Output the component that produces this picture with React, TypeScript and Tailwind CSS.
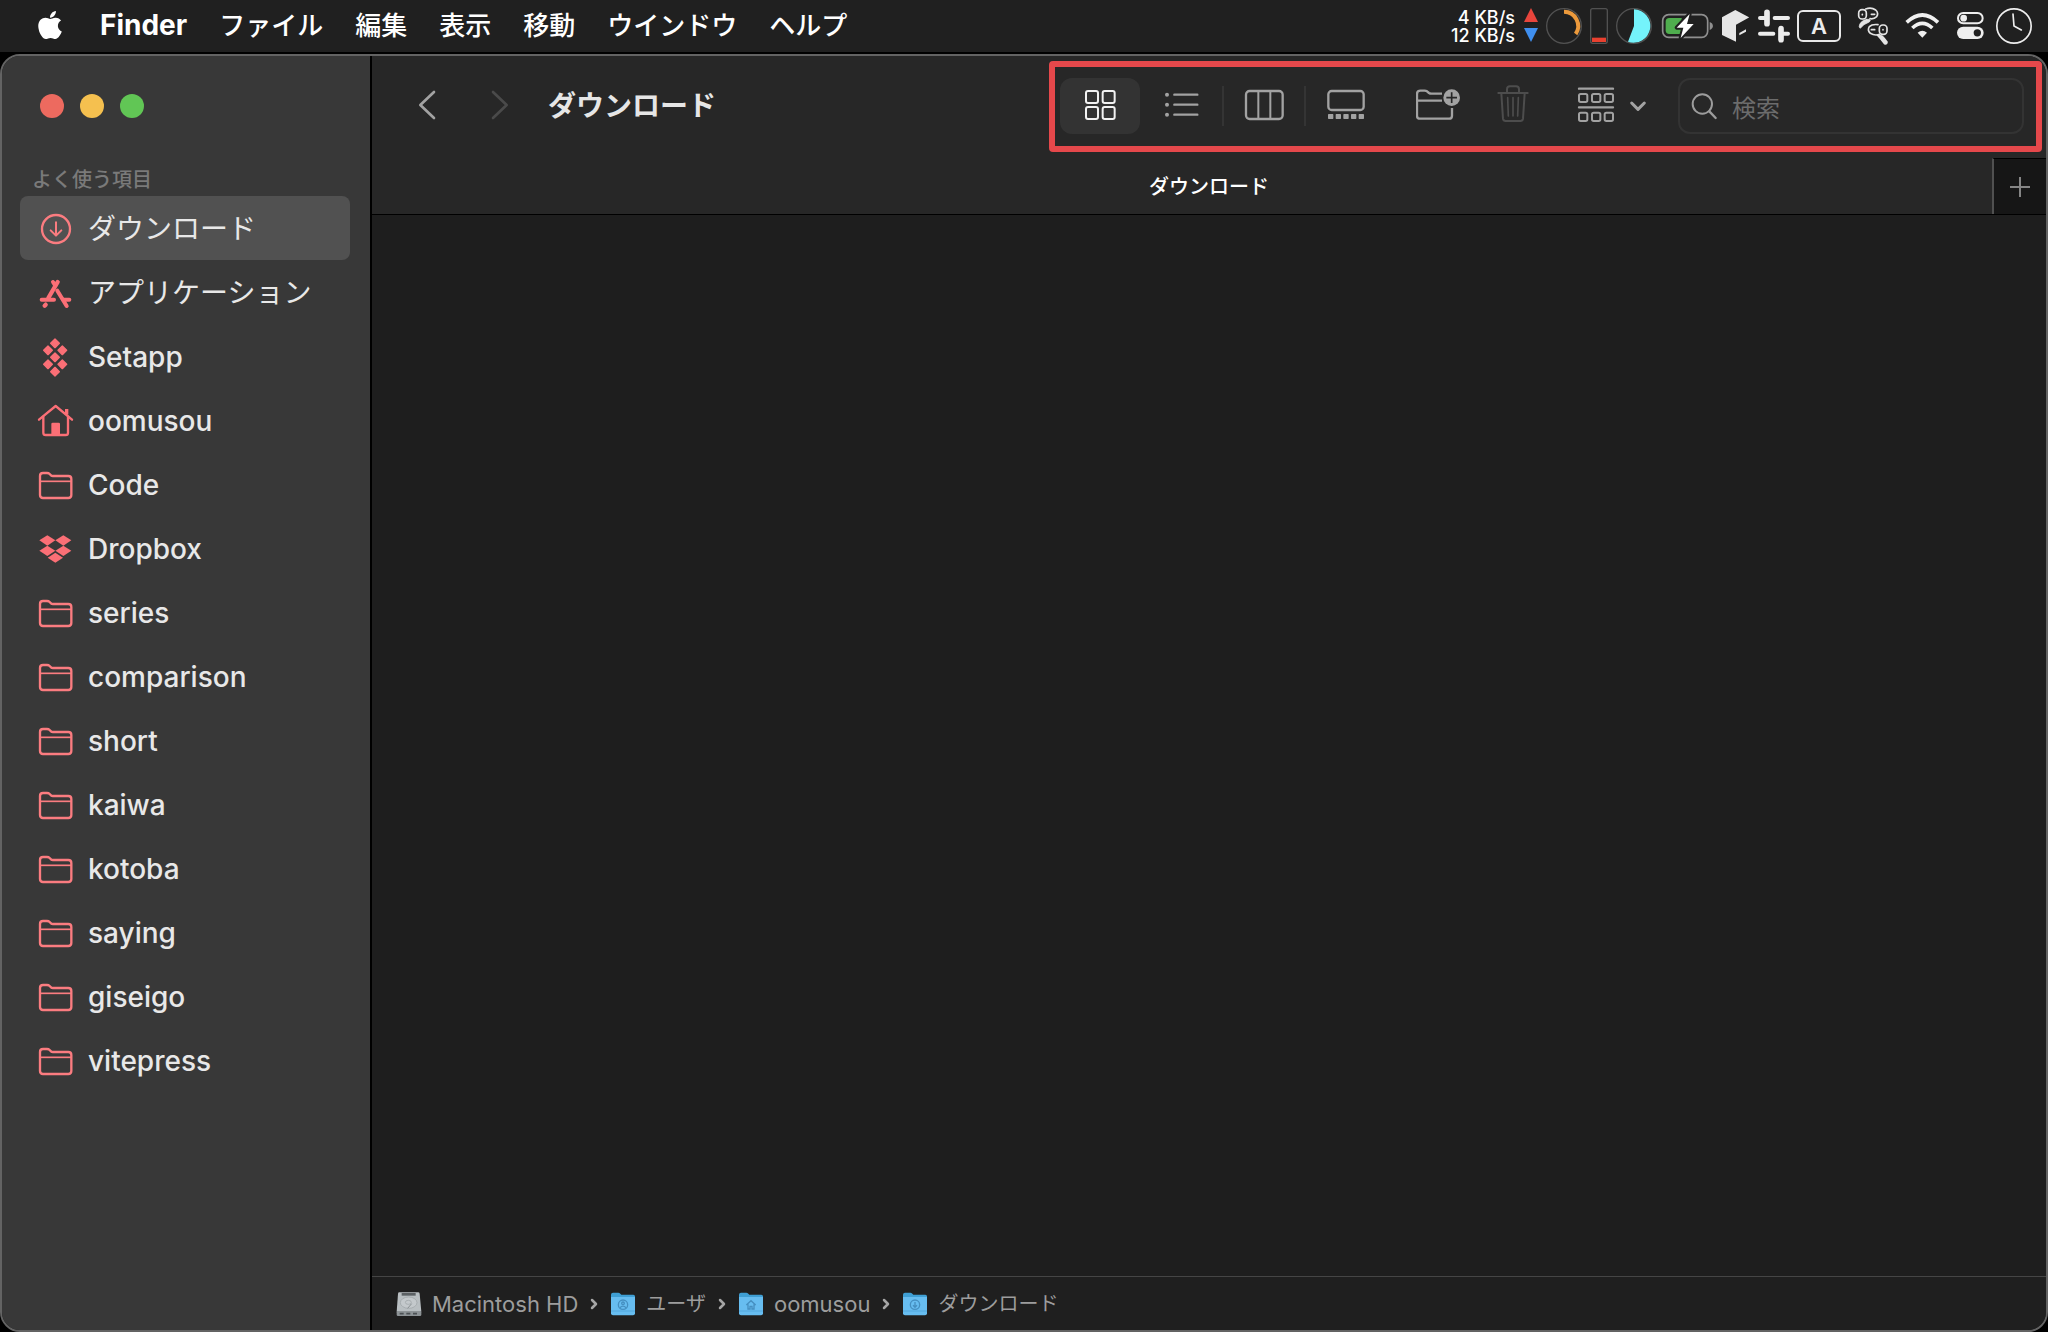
import React from "react";
import { FaApple } from "react-icons/fa";

/* ---------- Menu bar ---------- */

const menus = ["ファイル", "編集", "表示", "移動", "ウインドウ", "ヘルプ"];

function TrafficArrows() {
  return (
    <svg className="h-13 w-4" viewBox="279 0 48 156" aria-hidden="true">
      <path d="M303 24 L324 66 H282 Z" fill="#e8453c" />
      <path d="M282 84 H324 L303 126 Z" fill="#3f8ff0" />
    </svg>
  );
}

function CpuRing() {
  return (
    <svg className="h-13 w-[34px]" viewBox="351 0 102 156" fill="none" overflow="visible" aria-hidden="true">
      <circle cx="402" cy="78" r="52" stroke="#515151" strokeWidth="4" />
      <path d="M402 35.500 A42.500 42.500 0 0 1 437 102" stroke="#ec9a3c" strokeWidth="12" />
    </svg>
  );
}

function MemoryBar() {
  return (
    <svg className="h-13 w-[18px]" viewBox="477 0 54 156" overflow="visible" aria-hidden="true">
      <rect x="482" y="26" width="50" height="104" rx="6" fill="none" stroke="#515151" strokeWidth="4" />
      <rect x="486" y="113" width="42" height="13" fill="#e8402f" />
    </svg>
  );
}

function DiskPie() {
  return (
    <svg className="h-13 w-[38px]" viewBox="555 0 114 156" aria-hidden="true">
      <circle cx="612" cy="78" r="52" fill="none" stroke="#515151" strokeWidth="4" />
      <path d="M612 78 V28 A50 50 0 1 1 594 125 Z" fill="#74f3fb" />
    </svg>
  );
}

function Battery() {
  return (
    <svg className="h-13 w-[52px]" viewBox="693 0 156 156" aria-hidden="true">
      <rect x="698" y="44" width="135" height="68" rx="18" fill="none" stroke="#8f8f8f" strokeWidth="5" />
      <path d="M839 66 C852 70 852 86 839 90 Z" fill="#8f8f8f" />
      <path d="M718 54 H755 V102 H718 Q707 102 707 91 V65 Q707 54 718 54 Z" fill="#4fae4e" />
      <path d="M779 42 L740 83 H760 L752 114 L791 72 H771 Z" fill="#fff" stroke="#202020" strokeWidth="12" paintOrder="stroke" strokeLinejoin="round" />
    </svg>
  );
}

function Cube() {
  return (
    <svg className="h-13 w-7" viewBox="-27 0 84 156" fill="#e6e6e6" aria-hidden="true">
      <path d="M16 30 L58 52 L18 74 V125 L-24 105 V52 Z" />
      <path d="M28 99 L48 88 V95 L28 106 Z" />
    </svg>
  );
}

function Tuner() {
  return (
    <svg className="h-13 w-8" viewBox="81 0 96 156" fill="none" stroke="#ececec" strokeWidth="12" strokeLinecap="round" overflow="visible" aria-hidden="true">
      <path d="M90 54 H111 M134 54 H174 M90 101 H130 M153 101 H174" />
      <path d="M111 37 V71 M153 86 V119" strokeWidth="17" />
    </svg>
  );
}

function Earbuds() {
  return (
    <svg className="h-13 w-8" viewBox="381 0 96 156" fill="none" stroke="#e4e4e4" strokeWidth="5" strokeLinecap="round" overflow="visible" aria-hidden="true">
      <rect x="386" y="29" width="23" height="28" rx="10" />
      <path d="M397 43 V44" />
      <path d="M407 27 Q424 21 437 30 Q447 39 440 50 Q432 58 420 56" />
      <path d="M424 43 H434" />
      <path d="M410 58 H418 Q424 60 418 66 L402 74 L391 85 Q385 82 389 73 Q394 62 410 58 Z" fill="#e4e4e4" strokeWidth="2" />
      <rect x="448" y="75" width="23" height="28" rx="10" />
      <path d="M459 89 V90" />
      <path d="M449 103 Q434 108 421 100 Q411 91 418 80 Q426 72 444 74" />
      <path d="M424 89 H434" />
      <path d="M444 107 Q456 106 461 113 L471 126 Q471 133 464 131 L452 116 Z" fill="#e4e4e4" />
    </svg>
  );
}

function Wifi() {
  return (
    <svg className="h-13 w-9" viewBox="525 0 108 156" fill="none" stroke="#f0f0f0" strokeWidth="11" aria-hidden="true">
      <path d="M530 67 Q577 23 624 67" />
      <path d="M547 84 Q577 56 607 84" />
      <path d="M577 113 L563 98 Q577 86 591 98 Z" fill="#f0f0f0" stroke="none" />
    </svg>
  );
}

function ControlCenter() {
  return (
    <svg className="h-13 w-7" viewBox="681 0 84 156" overflow="visible" aria-hidden="true">
      <rect x="684" y="39" width="74" height="31" rx="15.500" fill="none" stroke="#eee" strokeWidth="6" />
      <circle cx="701" cy="54.500" r="10" fill="#eee" />
      <rect x="681" y="80" width="80" height="37" rx="18.500" fill="#eee" />
      <circle cx="742" cy="98.500" r="11" fill="#202020" />
    </svg>
  );
}

function Clock() {
  return (
    <svg className="h-13 w-[34px]" viewBox="801 0 102 156" fill="none" stroke="#eee" strokeWidth="5" strokeLinecap="round" overflow="visible" aria-hidden="true">
      <circle cx="852" cy="78" r="51.500" />
      <path d="M849 42 L852 78 L874 90" />
    </svg>
  );
}

function MenuBar() {
  return (
    <header className="flex h-13 items-center justify-between bg-[#202020] text-white">
      <nav className="flex h-full items-center pl-9 text-[26px] leading-8 whitespace-nowrap" aria-label="メニュー">
        <button type="button" aria-label="Apple" className="mr-9 pb-0.5">
          <FaApple className="h-8 w-7" />
        </button>
        <div className="flex items-baseline gap-8 pb-0.5">
          <button type="button" className="text-[28px] font-bold">Finder</button>
          {menus.map((m) => (
            <button key={m} type="button" className="font-medium">{m}</button>
          ))}
        </div>
      </nav>
      <div className="flex items-center gap-4 pr-[17px]">
        <div className="flex items-center gap-2">
          <div className="pt-0.5 text-right text-[18px] leading-[18px] font-medium whitespace-nowrap">
            <div>4 KB/s</div>
            <div>12 KB/s</div>
          </div>
          <TrafficArrows />
          <CpuRing />
          <MemoryBar />
          <DiskPie />
          <Battery />
          <Cube />
          <Tuner />
          <span className="flex h-8 w-11 items-center justify-center rounded-md border-2 border-[#e8e8e8] text-[22px] leading-7 font-semibold text-[#ececec]">A</span>
        </div>
        <Earbuds />
        <Wifi />
        <div className="flex gap-3">
          <ControlCenter />
          <Clock />
        </div>
      </div>
    </header>
  );
}

/* ---------- Sidebar ---------- */

const sideIcon = "h-10 w-9 shrink-0 overflow-visible";

function DownloadIcon() {
  return (
    <svg className={sideIcon} viewBox="114 624 108 120" fill="none" stroke="#fb7c80" strokeWidth="7" strokeLinecap="round" strokeLinejoin="round" aria-hidden="true">
      <circle cx="168" cy="687" r="42" />
      <path d="M168 667 V705 M152 691 L168 707 L184 691" strokeWidth="6" />
    </svg>
  );
}

function AppsIcon() {
  return (
    <svg className={sideIcon} viewBox="114 36 108 120" fill="none" stroke="#fb6f76" strokeWidth="12" strokeLinecap="round" aria-hidden="true">
      <path d="M173 66 L145 114" strokeWidth="13" />
      <path d="M159 66 L166 77" />
      <path d="M125 119 H162 M190 119 H208" />
      <path d="M172 92 L200 138" />
      <path d="M137 134 L134 137" strokeWidth="13" />
    </svg>
  );
}

const setappTiles = [[165, 250], [144, 271], [187, 271], [165, 292], [144, 313], [187, 313], [165, 335]];

function SetappIcon() {
  return (
    <svg className={sideIcon} viewBox="114 228 108 120" fill="#fb6f76" stroke="#fb6f76" strokeWidth="4" strokeLinejoin="round" aria-hidden="true">
      {setappTiles.map(([x, y]) => (
        <path key={`${x}-${y}`} d={`M${x} ${y - 13} L${x + 13} ${y} L${x} ${y + 13} L${x - 13} ${y} Z`} />
      ))}
    </svg>
  );
}

function HomeIcon() {
  return (
    <svg className={sideIcon} viewBox="114 420 108 120" fill="none" stroke="#fb6f76" strokeWidth="7" strokeLinecap="round" strokeLinejoin="round" aria-hidden="true">
      <path d="M117 479 L167 438 L216 479" />
      <path d="M130 470 V518 Q130 525 137 525 H197 Q204 525 204 518 V470" />
      <path d="M200 447 V464" strokeWidth="10" strokeLinecap="butt" />
      <path d="M154 525 V492 Q154 488 158 488 H176 Q180 488 180 492 V525 Z" fill="#fb6f76" stroke="none" />
    </svg>
  );
}

function FolderIcon() {
  return (
    <svg className={sideIcon} viewBox="114 612 108 120" fill="none" stroke="#fb7c80" strokeWidth="7" strokeLinejoin="round" aria-hidden="true">
      <path d="M120 648 Q120 639 129 639 H141 Q146 639 149 642 L153 646 Q155 648 159 648 H205 Q214 648 214 657 V705 Q214 714 205 714 H129 Q120 714 120 705 Z" />
      <path d="M120 664 H214" strokeWidth="5" />
    </svg>
  );
}

function DropboxIcon() {
  return (
    <svg className={sideIcon} viewBox="114 804 108 120" fill="#fb6f76" aria-hidden="true">
      <path d="M142 826 L166 841 L142 857 L118 841 Z" />
      <path d="M190 826 L214 841 L190 857 L166 841 Z" />
      <path d="M142 857 L166 872 L142 888 L118 872 Z" />
      <path d="M190 857 L214 872 L190 888 L166 872 Z" />
      <path d="M166 878 L189 893 L166 908 L143 893 Z" />
    </svg>
  );
}

const favorites: { name: string; icon: () => React.JSX.Element }[] = [
  { name: "ダウンロード", icon: DownloadIcon },
  { name: "アプリケーション", icon: AppsIcon },
  { name: "Setapp", icon: SetappIcon },
  { name: "oomusou", icon: HomeIcon },
  { name: "Code", icon: FolderIcon },
  { name: "Dropbox", icon: DropboxIcon },
  { name: "series", icon: FolderIcon },
  { name: "comparison", icon: FolderIcon },
  { name: "short", icon: FolderIcon },
  { name: "kaiwa", icon: FolderIcon },
  { name: "kotoba", icon: FolderIcon },
  { name: "saying", icon: FolderIcon },
  { name: "giseigo", icon: FolderIcon },
  { name: "vitepress", icon: FolderIcon },
];

function Sidebar() {
  return (
    <aside className="flex w-[370px] shrink-0 flex-col border-r-2 border-black bg-[#383838] pr-5 pl-[18px]">
      <div className="flex h-[100px] items-center gap-4 pl-5">
        <button type="button" aria-label="閉じる" className="size-6 rounded-full bg-[#ed6a5f]" />
        <button type="button" aria-label="しまう" className="size-6 rounded-full bg-[#f5c04f]" />
        <button type="button" aria-label="拡大" className="size-6 rounded-full bg-[#61c655]" />
      </div>
      <h2 className="h-10 pt-2 pl-3 text-[20px] leading-8 font-medium text-[#7a7a7a]">よく使う項目</h2>
      <nav aria-label="よく使う項目">
        {favorites.map(({ name, icon: Icon }, i) => (
          <a
            key={name}
            href="#"
            className={
              i === 0
                ? "flex h-16 items-center gap-3.5 rounded-lg bg-[#515151] pl-[18px] text-[28px] leading-10 font-medium text-[#e8e8e8]"
                : "flex h-16 items-center gap-3.5 rounded-lg pl-[18px] text-[28px] leading-10 font-medium text-[#e8e8e8]"
            }
          >
            <Icon />
            <span className={i < 2 ? "pt-0.5 font-normal whitespace-nowrap" : "pt-0.5 whitespace-nowrap"}>{name}</span>
          </a>
        ))}
      </nav>
    </aside>
  );
}

/* ---------- Toolbar ---------- */

function GridIcon() {
  return (
    <svg className="size-10" viewBox="120 108 120 120" fill="none" stroke="#f2f2f2" strokeWidth="6" aria-hidden="true">
      <rect x="138" y="123" width="36" height="36" rx="6" />
      <rect x="188" y="123" width="36" height="36" rx="6" />
      <rect x="138" y="171" width="36" height="36" rx="6" />
      <rect x="188" y="171" width="36" height="36" rx="6" />
    </svg>
  );
}

function ListIcon() {
  return (
    <svg className="size-10" viewBox="366 108 120 120" stroke="#a2a2a2" strokeWidth="7" strokeLinecap="round" aria-hidden="true">
      <path d="M403 134 H472 M403 164 H472 M403 194 H472" />
      <path d="M381 134 V134.100 M381 164 V164.100 M381 194 V194.100" strokeWidth="12" />
    </svg>
  );
}

function ColumnsIcon() {
  return (
    <svg className="size-10" viewBox="612 108 120 120" fill="none" stroke="#a2a2a2" strokeWidth="7" aria-hidden="true">
      <rect x="618" y="123" width="110" height="84" rx="11" />
      <path d="M655 123 V207 M691 123 V207" strokeWidth="6" />
    </svg>
  );
}

function GalleryIcon() {
  return (
    <svg className="size-10" viewBox="858 108 120 120" fill="#a2a2a2" aria-hidden="true">
      <rect x="865" y="123" width="106" height="57" rx="10" fill="none" stroke="#a2a2a2" strokeWidth="7" />
      {[864, 887, 910, 933, 956].map((x) => (
        <rect key={x} x={x} y="192" width="16" height="15" rx="2" />
      ))}
    </svg>
  );
}

function NewFolderIcon() {
  return (
    <svg className="h-10 w-11" viewBox="1128 108 132 120" fill="none" stroke="#a2a2a2" strokeWidth="7" strokeLinejoin="round" aria-hidden="true">
      <path d="M1206 131 H1174 Q1170 131 1167 129 L1161 124 Q1158 122 1154 122 H1141 Q1131 122 1131 132 V197 Q1131 206 1140 206 H1227 Q1236 206 1236 197 V174" />
      <path d="M1131 152 H1206" />
      <circle cx="1235" cy="143" r="25" fill="#a2a2a2" stroke="none" />
      <path d="M1235 127 V159 M1219 143 H1251" stroke="#272727" strokeWidth="5" />
    </svg>
  );
}

function TrashIcon() {
  return (
    <svg className="h-10 w-[34px]" viewBox="1368 108 102 120" fill="none" stroke="#4d4d4d" strokeWidth="6" strokeLinecap="round" strokeLinejoin="round" overflow="visible" aria-hidden="true">
      <path d="M1375 129 H1463" />
      <path d="M1401 128 V118 Q1401 109 1410 109 H1428 Q1437 109 1437 118 V128" />
      <path d="M1384 130 L1389 206 Q1390 213 1397 213 H1441 Q1448 213 1449 206 L1454 130" />
      <path d="M1403 143 L1405 198 M1419 143 V198 M1435 143 L1433 198" strokeWidth="5" />
    </svg>
  );
}

function GroupIcon() {
  return (
    <svg className="h-10 w-[68px]" viewBox="114 108 204 120" fill="none" stroke="#a2a2a2" strokeWidth="6" strokeLinecap="round" strokeLinejoin="round" overflow="visible" aria-hidden="true">
      <path d="M117 116 H219 M117 172 H219" strokeWidth="7" />
      {[117, 156, 194].map((x) => (
        <g key={x}>
          <rect x={x} y="132" width="25" height="24" rx="5" />
          <rect x={x} y="188" width="25" height="25" rx="5" />
        </g>
      ))}
      <path d="M275 159 L294 178 L313 159" strokeWidth="9" />
    </svg>
  );
}

function Toolbar() {
  return (
    <div className="flex h-[102px] justify-between bg-[#272727] pr-1">
      <div className="flex items-center pb-1 pl-[35px]">
        <button type="button" aria-label="戻る" className="mr-[33px]">
          <svg className="size-10" viewBox="1221 255 120 120" fill="none" stroke="#a2a2a2" strokeWidth="8" strokeLinecap="round" strokeLinejoin="round" aria-hidden="true">
            <path d="M1302 276 L1261 315 L1302 354" />
          </svg>
        </button>
        <button type="button" aria-label="進む" className="mr-7">
          <svg className="size-10" viewBox="90 255 120 120" fill="none" stroke="#4a4a4a" strokeWidth="8" strokeLinecap="round" strokeLinejoin="round" aria-hidden="true">
            <path d="M129 276 L170 315 L129 354" />
          </svg>
        </button>
        <h1 className="pt-0.5 text-[28px] leading-10 font-bold whitespace-nowrap text-[#e6e6e6]">ダウンロード</h1>
      </div>
      <div className="mt-[5px] flex items-start self-start rounded-[4px] border-6 border-[#e5484b] pt-[11px] pr-3 pb-3 pl-[5px]">
        <div className="flex items-center">
          <button type="button" aria-label="アイコン表示" aria-pressed="true" className="mr-0.5 flex h-14 w-20 items-center justify-center rounded-xl bg-[#333]">
            <GridIcon />
          </button>
          <button type="button" aria-label="リスト表示" className="flex h-14 w-20 items-center justify-center">
            <ListIcon />
          </button>
          <div className="h-10 w-0.5 bg-[#343434]" />
          <button type="button" aria-label="カラム表示" className="flex h-14 w-20 items-center justify-center">
            <ColumnsIcon />
          </button>
          <div className="h-10 w-0.5 bg-[#343434]" />
          <button type="button" aria-label="ギャラリー表示" className="flex h-14 w-20 items-center justify-center">
            <GalleryIcon />
          </button>
        </div>
        <button type="button" aria-label="新規フォルダ" className="ml-[30px] flex h-14 items-center">
          <NewFolderIcon />
        </button>
        <button type="button" aria-label="ゴミ箱" className="ml-9 flex h-14 items-center">
          <TrashIcon />
        </button>
        <button type="button" aria-label="グループ" className="ml-12 flex h-14 items-center">
          <GroupIcon />
        </button>
        <label className="ml-8 flex h-14 w-[346px] items-center gap-3 rounded-xl border-2 border-[#333] pl-2.5">
          <svg className="size-[30px] shrink-0" viewBox="450 123 90 90" fill="none" stroke="#9c9c9c" strokeWidth="6" strokeLinecap="round" aria-hidden="true">
            <circle cx="487" cy="162" r="29" />
            <path d="M508 184 L527 204" strokeWidth="7" />
          </svg>
          <input type="text" placeholder="検索" aria-label="検索" className="w-full min-w-0 bg-transparent pt-1.5 text-[24px] leading-8 text-[#ddd] outline-none placeholder:text-[#6c6c6c]" />
        </label>
      </div>
    </div>
  );
}

/* ---------- Path bar ---------- */

function DriveIcon() {
  return (
    <svg className="h-6 w-[26px]" viewBox="51 93 78 72" aria-hidden="true">
      <path d="M60 94 H118 Q121 94 122 98 L127 152 H53 L57 98 Q58 94 60 94 Z" fill="#b9bfc2" />
      <rect x="53" y="150" width="74" height="15" rx="4" fill="#8d9396" />
      <rect x="68" y="96" width="42" height="8" fill="#5c6164" />
      <ellipse cx="89" cy="125" rx="25" ry="17" fill="#c4c9cc" stroke="#9ba1a4" strokeWidth="2" />
      <ellipse cx="88" cy="124" rx="9" ry="6" fill="none" stroke="#9ba1a4" strokeWidth="2" />
      <path d="M98 128 L86 142" stroke="#8a9093" strokeWidth="3" />
      <path d="M62 158 H74 M82 158 H94 M102 158 H114" stroke="#4c5154" strokeWidth="5" />
    </svg>
  );
}

function BlueFolder({ children }: { children: React.ReactNode }) {
  return (
    <svg className="h-6 w-[26px]" viewBox="693 96 78 72" aria-hidden="true">
      <path d="M696 104 Q696 98 702 98 H718 Q721 98 724 101 L727 104 H763 Q768 104 768 109 V160 H696 Z" fill="#3f9fd4" />
      <path d="M696 111 H768 V160 Q768 166 762 166 H702 Q696 166 696 160 Z" fill="#67bdf0" />
      <path d="M696 153 H768" stroke="#4a9fd2" strokeWidth="2" />
      <g fill="none" stroke="#458fc0" strokeWidth="4">{children}</g>
    </svg>
  );
}

function Chevron() {
  return (
    <svg className="h-3 w-2 shrink-0" viewBox="0 0 8 12" fill="none" stroke="#a6a6a6" strokeWidth="2.500" strokeLinecap="round" strokeLinejoin="round" aria-hidden="true">
      <path d="M2 2 L6 6 L2 10" />
    </svg>
  );
}

function PathBar() {
  return (
    <footer className="flex h-[54px] items-center gap-3 border-t border-[#454545] bg-[#1f1f1f] pl-6 text-[22px] leading-8 whitespace-nowrap text-[#9d9d9d]">
      <a href="#" className="flex items-center gap-2.5">
        <DriveIcon />
        Macintosh HD
      </a>
      <Chevron />
      <a href="#" className="flex items-center gap-2.5 text-[20px]">
        <BlueFolder>
          <circle cx="732" cy="134" r="14" />
          <circle cx="732" cy="130" r="4" />
          <path d="M723 143 Q732 134 741 143" />
        </BlueFolder>
        ユーザ
      </a>
      <Chevron />
      <a href="#" className="flex items-center gap-2.5">
        <BlueFolder>
          <path d="M718 135 L732 122 L746 135 M723 133 V147 H729 V139 H735 V147 H741 V133" />
        </BlueFolder>
        oomusou
      </a>
      <Chevron />
      <a href="#" className="flex items-center gap-2.5 text-[20px]">
        <BlueFolder>
          <circle cx="732" cy="134" r="14" />
          <path d="M732 126 V141 M726 136 L732 142 L738 136" />
        </BlueFolder>
        ダウンロード
      </a>
    </footer>
  );
}

/* ---------- Window ---------- */

export default function App() {
  return (
    <div className="flex min-h-screen flex-col bg-black font-['Inter','Noto_Sans_CJK_JP',sans-serif]">
      <MenuBar />
      <div className="mt-0.5 flex grow overflow-hidden rounded-[20px] border-2 border-[#636363] bg-[#1e1e1e]">
        <Sidebar />
        <main className="flex min-w-0 grow flex-col">
          <Toolbar />
          <div className="flex h-[57px] border-b border-black bg-[#272727]">
            <button type="button" className="grow pt-0.5 pl-[54px] text-[20px] leading-8 font-medium text-white">ダウンロード</button>
            <button type="button" aria-label="新規タブ" className="flex w-[54px] items-center justify-center border-t border-l-2 border-t-black border-l-[#505050] bg-[#161616]">
              <svg className="size-6" viewBox="0 0 24 24" stroke="#858585" strokeWidth="2" aria-hidden="true">
                <path d="M12 2 V22 M2 12 H22" />
              </svg>
            </button>
          </div>
          <section aria-label="フォルダの内容" className="grow bg-[#1e1e1e]" />
          <PathBar />
        </main>
      </div>
    </div>
  );
}
